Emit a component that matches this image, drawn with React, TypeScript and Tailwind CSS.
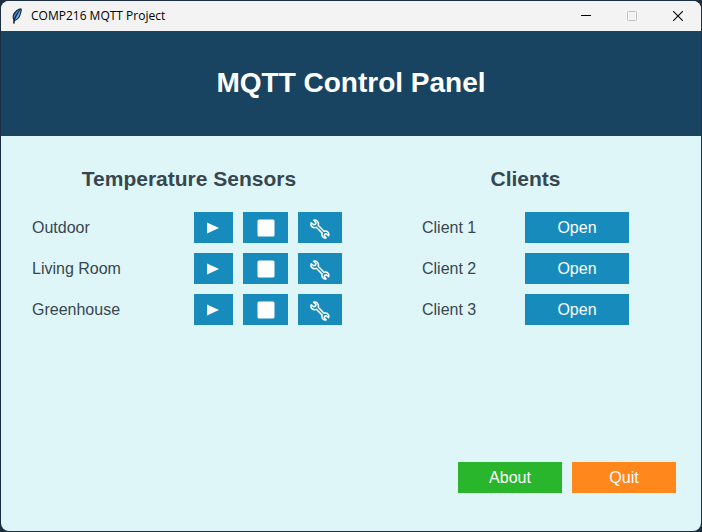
import React from "react";

const sensors = ["Outdoor", "Living Room", "Greenhouse"];
const clients = ["Client 1", "Client 2", "Client 3"];

function Feather() {
  return (
    <svg viewBox="0 0 16 16" className="h-4 w-4" aria-hidden="true">
      <path d="M12.300 0.200C9 0.300 5 3.400 3.900 7.200c-.5 1.700-.3 3.300.4 4.700l-.2 3.700 1.400.2.400-2.800c2.600-1 4.700-3 5.500-5.400.5-1.700.8-3.200 1.300-4.700.2-.9.100-1.800-.4-2.700z" fill="#1a1f28" />
      <path d="M11 1.200C8.200 2.200 5.700 5 4.900 7.800c-.3 1-.3 2-.2 3.200C6.200 8 8.400 4.600 11 1.200z" fill="#3f86d8" />
      <path d="M11.700 1.600C9.300 5 7.300 8.400 5.900 12c2.200-1 3.800-2.700 4.500-4.800C11 5.400 11.500 3.800 11.700 1.600z" fill="#62a8f0" />
    </svg>
  );
}

function Wrench() {
  return (
    <svg
      viewBox="0 0 20 20"
      className="h-5 w-5"
      fill="none"
      stroke="#ffffff"
      strokeWidth="1.5"
      strokeLinejoin="round"
      strokeLinecap="round"
      aria-hidden="true"
    >
      <path d="M3.600 1.200L6.100 3.700L5.300 5.300L3.700 5.800L1.200 3.700C.6 5.800 1.500 7.900 3.500 8.500C4.700 8.900 5.700 8.500 6.300 8.300L12.200 14.100C11.700 15.600 11.900 17 12.900 18C13.900 19 15.100 19.200 16.200 18.900L14.300 16.800L14.700 15.200L16.300 14.700L18.600 16.700C19.100 15.200 18.700 13.700 17.600 12.700C16.500 11.800 15.200 11.700 14 12.200L8.200 6.200C8.700 4.800 8.400 3.300 7.400 2.200C6.300 1.100 4.900 .8 3.600 1.200Z" />
    </svg>
  );
}

const blue = "flex h-[31px] items-center justify-center bg-[#178cbc] text-white";

export default function App() {
  return (
    <div className="flex min-h-screen bg-[#1c2f42] p-px font-['Liberation_Sans',Arial,sans-serif] text-base text-[#37474f]">
      <div className="flex flex-1 flex-col overflow-hidden rounded-lg bg-[#dff6f9]">
        <div className="flex h-[30px] items-center bg-[#f3f3f3] pl-2 text-black">
          <Feather />
          <span className="ml-1.5 flex-1 font-['Open_Sans','Noto_Sans',sans-serif] text-xs">
            COMP216 MQTT Project
          </span>
          <button aria-label="Minimize" className="flex h-full w-[46px] items-center justify-center">
            <svg viewBox="0 0 10 10" className="h-2.5 w-2.5" aria-hidden="true">
              <path d="M0 4.500H10" stroke="#000000" />
            </svg>
          </button>
          <button aria-label="Maximize" disabled className="flex h-full w-[46px] items-center justify-center">
            <svg viewBox="0 0 10 10" className="h-2.5 w-2.5" aria-hidden="true">
              <rect x="0.5" y="0.5" width="9" height="9" rx="0.8" fill="none" stroke="#c4c4c4" />
            </svg>
          </button>
          <button aria-label="Close" className="flex h-full w-[46px] items-center justify-center">
            <svg viewBox="0 0 10 10" className="h-2.5 w-2.5" aria-hidden="true">
              <path d="M0 0L10 10M10 0L0 10" stroke="#000000" strokeWidth="1.1" />
            </svg>
          </button>
        </div>

        <header className="flex h-[105px] items-center justify-center bg-[#184461] pb-0.5">
          <h1 className="text-[28px] leading-8 font-bold text-white">MQTT Control Panel</h1>
        </header>

        <main className="flex flex-1 flex-col pt-[27px] pr-[25px] pb-[38px] pl-[31px]">
          <div className="flex gap-20 pr-[47px]">
            <section className="flex-1">
              <h2 className="mb-[17px] pl-1 text-center text-[21px] leading-8 font-bold">Temperature Sensors</h2>
              <ul className="flex flex-col gap-2.5">
                {sensors.map((name) => (
                  <li key={name} className="flex items-center gap-2.5">
                    <span className="flex-1">{name}</span>
                    <button aria-label={`Start ${name}`} className={`${blue} w-[39px] pr-0.5`}>
                      <svg viewBox="0 0 12 12" className="h-3 w-3" aria-hidden="true">
                        <path d="M0 0.500L12 6L0 11.500Z" fill="#ffffff" />
                      </svg>
                    </button>
                    <button aria-label={`Stop ${name}`} className={`${blue} w-[45px]`}>
                      <svg viewBox="0 0 18 18" className="h-[18px] w-[18px]" aria-hidden="true">
                        <rect x="0.500" y="0.500" width="17" height="17" rx="1.500" fill="#ffffff" />
                      </svg>
                    </button>
                    <button aria-label={`Configure ${name}`} className={`${blue} w-11 pt-0.5`}>
                      <Wrench />
                    </button>
                  </li>
                ))}
              </ul>
            </section>
            <section className="w-[207px]">
              <h2 className="mb-[17px] text-center text-[21px] leading-8 font-bold">Clients</h2>
              <ul className="flex flex-col gap-2.5">
                {clients.map((name) => (
                  <li key={name} className="flex items-center justify-between">
                    <span>{name}</span>
                    <button aria-label={`Open ${name}`} className={`${blue} w-[104px]`}>
                      Open
                    </button>
                  </li>
                ))}
              </ul>
            </section>
          </div>

          <footer className="mt-auto flex justify-end gap-2.5 text-white">
            <button className="h-[31px] w-[104px] bg-[#29b62d]">About</button>
            <button className="h-[31px] w-[104px] bg-[#ff871c]">Quit</button>
          </footer>
        </main>
      </div>
    </div>
  );
}
